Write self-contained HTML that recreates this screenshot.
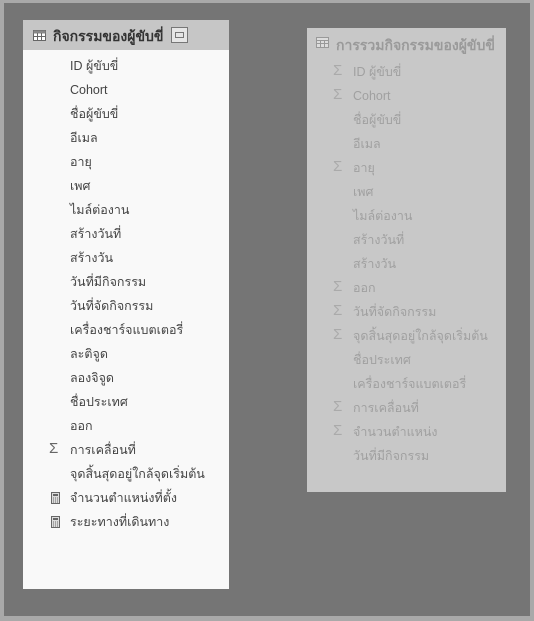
<!DOCTYPE html>
<html><head><meta charset="utf-8"><style>
html,body{margin:0;padding:0}
body{width:534px;height:621px;background:#a9a9a9;position:relative;overflow:hidden;font-family:"Liberation Sans","DejaVu Sans",sans-serif}
.bg{position:absolute;left:4px;top:3px;width:526px;height:613px;background:#757575}
.p{position:absolute}
.l{left:23px;top:20px;width:206px;height:569px;background:#f9f9f9}
.lh{position:absolute;left:0;top:0;width:206px;height:30px;background:#c6c6c6}
.r{left:307px;top:28px;width:199px;height:464px;background:#c8c8c8}
.t{position:absolute;font-size:12.5px;white-space:nowrap;line-height:14px}
.ti{position:absolute;font-size:14px;font-weight:bold;white-space:nowrap}
.ic{position:absolute;font-size:15px;font-weight:lighter}
</style></head><body>
<div class="bg"></div>
<div class="p l">
<div class="lh">
<svg style="position:absolute;left:10px;top:10px" width="13" height="11"><rect x=".5" y=".5" width="12" height="10" fill="#fff" stroke="#666"/><rect x=".5" y=".5" width="12" height="3" fill="#888"/><path d="M4.5 3v8M8.5 3v8M0 6.5h13" stroke="#666"/></svg>
<div class="ti" style="left:30px;top:6px;color:#333">กิจกรรมของผู้ขับขี่</div>
<svg style="position:absolute;left:148px;top:7px" width="17" height="16"><rect x=".5" y=".5" width="16" height="15" fill="#e6e6e6" stroke="#777"/><rect x="4.5" y="5.5" width="8" height="5" fill="none" stroke="#777"/></svg>
</div>
</div>
<div class="p r">
<svg style="position:absolute;left:9px;top:9px" width="13" height="11"><rect x=".5" y=".5" width="12" height="10" fill="#ddd" stroke="#999"/><path d="M4.5 3v8M8.5 3v8M0 6.5h13M0 3.5h13" stroke="#999"/></svg>
<div class="ti" style="left:29px;top:7px;color:#9a9a9a">การรวมกิจกรรมของผู้ขับขี่</div>
</div>
<div id="L"></div>
<script>
var L=[["","ID ผู้ขับขี่"],["","Cohort"],["","ชื่อผู้ขับขี่"],["","อีเมล"],["","อายุ"],["","เพศ"],["","ไมล์ต่องาน"],["","สร้างวันที่"],["","สร้างวัน"],["","วันที่มีกิจกรรม"],["","วันที่จัดกิจกรรม"],["","เครื่องชาร์จแบตเตอรี่"],["","ละติจูด"],["","ลองจิจูด"],["","ชื่อประเทศ"],["","ออก"],["s","การเคลื่อนที่"],["","จุดสิ้นสุดอยู่ใกล้จุดเริ่มต้น"],["c","จำนวนตำแหน่งที่ตั้ง"],["c","ระยะทางที่เดินทาง"]];
var R=[["s","ID ผู้ขับขี่"],["s","Cohort"],["","ชื่อผู้ขับขี่"],["","อีเมล"],["s","อายุ"],["","เพศ"],["","ไมล์ต่องาน"],["","สร้างวันที่"],["","สร้างวัน"],["s","ออก"],["s","วันที่จัดกิจกรรม"],["s","จุดสิ้นสุดอยู่ใกล้จุดเริ่มต้น"],["","ชื่อประเทศ"],["","เครื่องชาร์จแบตเตอรี่"],["s","การเคลื่อนที่"],["s","จำนวนตำแหน่ง"],["","วันที่มีกิจกรรม"]];
var h="";
L.forEach(function(a,i){var y=59+i*24;h+='<div class="t" style="left:70px;top:'+y+'px;color:#444">'+a[1]+'</div>';
if(a[0]=="s")h+='<div class="ic" style="left:49px;top:'+(y-3)+'px;color:#666">&Sigma;</div>';
if(a[0]=="c")h+='<svg style="position:absolute;left:51px;top:'+(y+1)+'px" width="9" height="12"><rect x=".5" y=".5" width="8" height="11" fill="#ddd" stroke="#666"/><rect x="2" y="2" width="5" height="2" fill="#666"/><path d="M2 6h1M4 6h1M6 6h1M2 8h1M4 8h1M6 8h1M2 10h1M4 10h1M6 10h1" stroke="#666"/></svg>';});
R.forEach(function(a,i){var y=65+i*24;h+='<div class="t" style="left:353px;top:'+y+'px;color:#a0a0a0">'+a[1]+'</div>';
if(a[0]=="s")h+='<div class="ic" style="left:333px;top:'+(y-3)+'px;color:#aaa">&Sigma;</div>';});
document.getElementById("L").innerHTML=h;
</script>
</body></html>
